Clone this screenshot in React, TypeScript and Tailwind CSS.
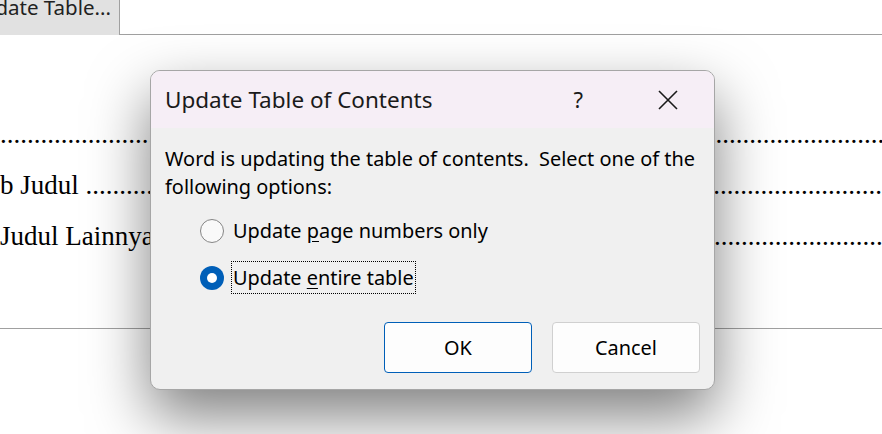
const dots = ".".repeat(200);

function DocRow({ text }: { text: string }) {
  return (
    <div className="flex h-[51px] items-center whitespace-pre overflow-hidden">
      <span>{text}</span>
      <span>{dots}</span>
    </div>
  );
}

function Radio({ checked }: { checked?: boolean }) {
  return checked ? (
    <span className="flex h-6 w-6 shrink-0 items-center justify-center rounded-full bg-[#005fb8]">
      <span className="h-[10px] w-[10px] rounded-full bg-white" />
    </span>
  ) : (
    <span className="h-6 w-6 shrink-0 rounded-full border-[1.5px] border-[#858585] bg-[#f9f9f9]" />
  );
}

export default function App() {
  return (
    <div className="relative h-[434px] w-[882px] overflow-hidden bg-white">
      {/* document behind the dialog */}
      <div className="flex h-[35px] border-b border-[#a0a0a0]">
        <div
          className="flex h-[35px] w-[120px] items-start justify-end overflow-hidden border-r border-[#a0a0a0] bg-[#e1e1e1] pr-[8px] text-[20.5px] leading-[22px] text-[#222]"
          style={{ fontFamily: '"Noto Sans", sans-serif' }}
        >
          <span className="-mt-[4px] whitespace-nowrap">date Table...</span>
        </div>
      </div>
      <div
        className="h-[294px] border-b border-[#a0a0a0] pt-[74px] text-[27px] text-black"
        style={{ fontFamily: '"Liberation Serif", serif' }}
      >
        <DocRow text="" />
        <DocRow text="b Judul " />
        <DocRow text="Judul Lainnya " />
      </div>

      {/* dialog */}
      <div
        className="absolute left-[150px] top-[70px] flex h-[320px] w-[565px] flex-col overflow-hidden rounded-[10px] border border-[#a6a6a6] bg-[#f0f0f0] shadow-[0_26px_60px_rgba(0,0,0,0.5)]"
        style={{ fontFamily: '"Noto Sans", sans-serif' }}
      >
        <div className="flex h-[57px] shrink-0 items-center bg-[#f6eef6] pl-[14px] pr-[36px]">
          <span className="flex-1 whitespace-nowrap text-[22.5px] text-[#1a1a1a]">
            Update Table of Contents
          </span>
          <span className="mr-[75px] text-[22px] text-[#1a1a1a]">?</span>
          <svg width="20" height="20" viewBox="0 0 20 20" className="text-[#1a1a1a]">
            <path d="M1 1L19 19M19 1L1 19" stroke="currentColor" strokeWidth="1.6" fill="none" />
          </svg>
        </div>
        <div className="flex flex-1 flex-col px-[14px] pt-[17px] text-[19.9px] leading-[28px] text-black">
          <p className="whitespace-nowrap">
            Word is updating the table of contents.&nbsp; Select one of the
            <br />
            following options:
          </p>
          <div className="mt-[14px] flex h-[32px] items-center pl-[35px]">
            <Radio />
            <span className="ml-[9px] whitespace-nowrap">
              Update <u className="underline-offset-[3px]">p</u>age numbers only
            </span>
          </div>
          <div className="mt-[14px] flex h-[33px] items-center pl-[35px]">
            <Radio checked />
            <span className="ml-[7px] whitespace-nowrap border border-dotted border-black px-[1px] leading-[31px]">
              Update <u className="underline-offset-[3px]">e</u>ntire table
            </span>
          </div>
          <div className="mt-auto mb-[16px] flex justify-end gap-[20px]">
            <button className="h-[51px] w-[148px] rounded-[4px] border border-[#005fb8] bg-[#fdfdfd] text-[19.9px] text-black">
              OK
            </button>
            <button className="h-[51px] w-[148px] rounded-[4px] border border-[#d0d0d0] bg-[#fdfdfd] text-[19.9px] text-black">
              Cancel
            </button>
          </div>
        </div>
      </div>
    </div>
  );
}
